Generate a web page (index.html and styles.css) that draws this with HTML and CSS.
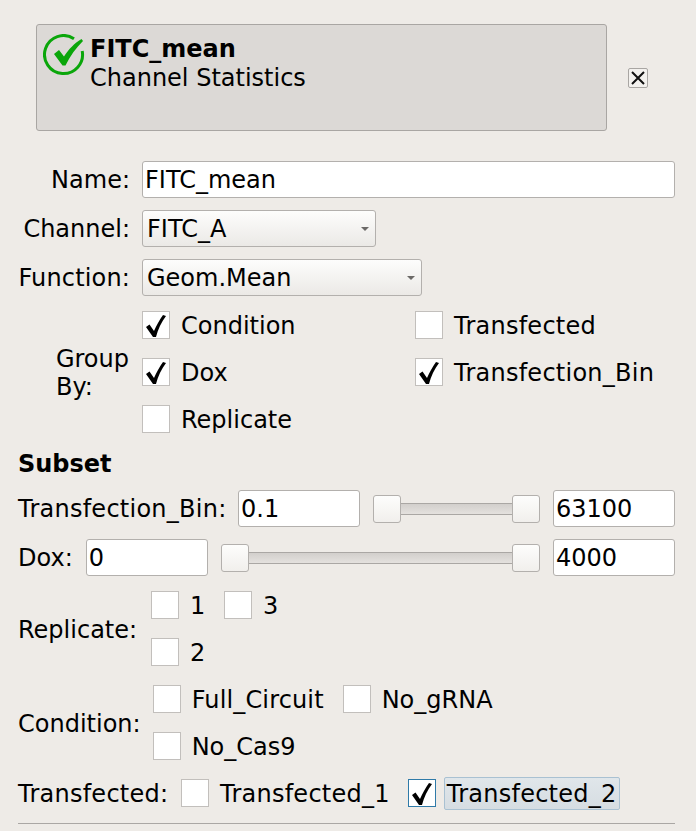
FILE: index.html
```html
<!DOCTYPE html>
<html lang="en">
  <head>
    <meta charset="UTF-8" />
    <title>FITC_mean</title>
    <link rel="stylesheet" href="styles.css">
  </head>
  <body>
    <svg class="defs" width="0" height="0">
      <symbol id="tick" viewBox="0 0 28 28">
        <path d="M4 16 L7.500 13.500 L12 20 C14.500 14 17.500 9 21 4 L24 5 C19.500 11 16 18 14 26 L11 26 Z" fill="#000" />
      </symbol>
    </svg>
    <div class="panel">
      <div class="head">
        <div class="card">
          <svg class="okicon" width="42" height="42" viewBox="0 0 42 42">
            <path d="M31 4.700 A19 19 0 1 0 39.200 17" fill="none" stroke="#0aa60a" stroke-width="3" />
            <path d="M11 20 L16 16 L21 22.500 C26 15 31 9.500 38.500 5 L40 7 C33 14 27 22 22.500 31.500 L19.500 31.500 Z" fill="#0aa60a" />
          </svg>
          <div class="cardtext">
            <div class="cardname">FITC_mean</div>
            <div>Channel Statistics</div>
          </div>
        </div>
        <div class="closebtn">
          <svg width="14" height="14" viewBox="0 0 14 14">
            <path d="M1 1 L13 13 M13 1 L1 13" stroke="#111" stroke-width="2" fill="none" />
          </svg>
        </div>
      </div>

      <div class="formrow first">
        <label class="lbl">Name:</label>
        <input class="txt wide" type="text" value="FITC_mean" />
      </div>
      <div class="formrow">
        <label class="lbl">Channel:</label>
        <div class="combo channel">FITC_A<span class="arrow"></span></div>
      </div>
      <div class="formrow">
        <label class="lbl"><span class="loose">Function:</span></label>
        <div class="combo func">Geom.Mean<span class="arrow"></span></div>
      </div>

      <div class="groupby">
        <div class="lbl grouplbl"><span>Group<br />By:</span></div>
        <div class="groupopts">
          <label class="opt"><span class="box"><svg width="28" height="28"><use href="#tick" /></svg></span>Condition</label>
          <label class="opt wider"><span class="box"></span>Transfected</label>
          <label class="opt"><span class="box"><svg width="28" height="28"><use href="#tick" /></svg></span>Dox</label>
          <label class="opt wider"><span class="box"><svg width="28" height="28"><use href="#tick" /></svg></span>Transfection_Bin</label>
          <label class="opt"><span class="box"></span>Replicate</label>
        </div>
      </div>

      <h2 class="subset">Subset</h2>

      <div class="rangerow">
        <label class="binlbl wider">Transfection_Bin:</label>
        <input class="txt num" type="text" value="0.1" />
        <div class="slider"><span class="handle"></span><span class="track"></span><span class="handle"></span></div>
        <input class="txt num" type="text" value="63100" />
      </div>
      <div class="rangerow">
        <label>Dox:</label>
        <input class="txt num" type="text" value="0" />
        <div class="slider"><span class="handle"></span><span class="track"></span><span class="handle"></span></div>
        <input class="txt num" type="text" value="4000" />
      </div>

      <div class="levels replicate">
        <label class="levellbl">Replicate:</label>
        <div class="levelgrid">
          <label class="opt"><span class="box"></span>1</label>
          <label class="opt"><span class="box"></span>3</label>
          <label class="opt"><span class="box"></span>2</label>
        </div>
      </div>
      <div class="levels condition">
        <label class="levellbl">Condition:</label>
        <div class="levelgrid">
          <label class="opt loose"><span class="box"></span>Full_Circuit</label>
          <label class="opt"><span class="box"></span>No_gRNA</label>
          <label class="opt"><span class="box"></span>No_Cas9</label>
        </div>
      </div>
      <div class="levels transfected">
        <label class="levellbl translbl wider">Transfected:</label>
        <label class="opt wider"><span class="box"></span>Transfected_1</label>
        <label class="opt wider focused"><span class="box"><svg width="28" height="28"><use href="#tick" /></svg></span><span class="seltext">Transfected_2</span></label>
      </div>
      <hr class="rule" />
    </div>
  </body>
</html>
```

FILE: styles.css
```css
html,
body {
  margin: 0;
  height: 831px;
  overflow: hidden;
  background: #eeebe7;
}
body {
  font-family: "DejaVu Sans", sans-serif;
  font-size: 24px;
  color: #000;
}
.defs {
  display: block;
  height: 0;
}
.panel {
  padding: 24px 21px 0 18px;
}
.wider {
  letter-spacing: 0.25px;
}
.loose {
  letter-spacing: 0.15px;
}

/* top card */
.head {
  display: flex;
  align-items: center;
  padding-left: 18px;
  height: 107px;
}
.card {
  box-sizing: border-box;
  display: flex;
  width: 571px;
  height: 107px;
  padding: 9px 0 0 6px;
  background: #dcd9d6;
  border: 1px solid #a9a6a3;
  border-radius: 3px;
}
.okicon {
  flex: none;
}
.cardtext {
  margin: 1px 0 0 5px;
  line-height: 29px;
}
.cardname {
  font-weight: bold;
}
.closebtn {
  box-sizing: border-box;
  display: flex;
  align-items: center;
  justify-content: center;
  width: 20px;
  height: 20px;
  margin-left: 21px;
  background: #f3f1ee;
  border: 1px solid #a9a6a3;
  border-radius: 2px;
}

/* name, channel, function */
.formrow {
  display: flex;
  align-items: center;
  gap: 12px;
  height: 37px;
  margin-top: 12px;
}
.formrow.first {
  margin-top: 30px;
}
.lbl {
  width: 112px;
  flex: none;
  text-align: right;
}
.txt {
  box-sizing: border-box;
  height: 37px;
  padding: 0 2px;
  font: inherit;
  color: #000;
  background: #fff;
  border: 1px solid #b3b0ad;
  border-radius: 3px;
  outline: none;
}
.wide {
  width: 533px;
}
.num {
  width: 122px;
  flex: none;
}
.combo {
  box-sizing: border-box;
  display: flex;
  align-items: center;
  justify-content: space-between;
  height: 37px;
  padding: 0 6px 0 4px;
  background: linear-gradient(#fdfdfc, #ebe9e6);
  border: 1px solid #b3b0ad;
  border-radius: 3px;
}
.channel {
  width: 234px;
}
.func {
  width: 280px;
}
.arrow {
  width: 0;
  height: 0;
  border-left: 4px solid transparent;
  border-right: 4px solid transparent;
  border-top: 4px solid #6b6967;
}

/* checkboxes */
.opt {
  display: flex;
  align-items: flex-start;
  height: 28px;
  line-height: 30px;
}
.box {
  box-sizing: border-box;
  flex: none;
  display: block;
  width: 28px;
  height: 28px;
  margin-right: 11px;
  background: #fff;
  border: 1px solid #c2bfbc;
}
.box svg {
  display: block;
  margin: -1px;
}

.groupby {
  display: flex;
  gap: 12px;
  margin-top: 15px;
}
.grouplbl {
  box-sizing: border-box;
  display: flex;
  align-items: center;
  justify-content: flex-end;
  padding: 2px 1px 0 0;
  text-align: left;
  line-height: 28px;
}
.groupopts {
  display: grid;
  grid-template-columns: 273px auto;
  row-gap: 19px;
}

.subset {
  margin: 17px 0 11px;
  font-size: 24px;
  line-height: 29px;
  font-weight: bold;
}

/* range rows */
.rangerow {
  display: flex;
  align-items: center;
  gap: 13px;
  height: 37px;
  margin-bottom: 12px;
}
.binlbl {
  flex: none;
  width: 207px;
  white-space: nowrap;
}
.slider {
  display: flex;
  align-items: center;
  flex: 1;
}
.handle {
  box-sizing: border-box;
  flex: none;
  width: 28px;
  height: 28px;
  background: linear-gradient(#fdfdfc, #f1efec);
  border: 1px solid #b3b0ad;
  border-radius: 3px;
}
.track {
  box-sizing: border-box;
  flex: 1;
  height: 12px;
  background: linear-gradient(#d2cfcc, #e4e1de);
  border-top: 1px solid #aaa7a4;
  border-bottom: 1px solid #aaa7a4;
}

/* level pickers */
.levels {
  display: flex;
  align-items: center;
}
.levellbl {
  padding-top: 2px;
}
.replicate {
  gap: 14px;
  margin-top: 15px;
}
.condition {
  gap: 12px;
  margin-top: 19px;
}
.transfected {
  height: 32px;
  margin-top: 17px;
  gap: 13px;
}
.translbl {
  flex: none;
  width: 150px;
  white-space: nowrap;
}
.levelgrid {
  display: grid;
  row-gap: 19px;
}
.replicate .levelgrid {
  grid-template-columns: 73px auto;
}
.condition .levelgrid {
  grid-template-columns: 190px auto;
}
.focused {
  margin-left: 5px;
}
.focused .box {
  margin-right: 8px;
  border-color: #2f7aa8;
}
.seltext {
  box-sizing: border-box;
  height: 33px;
  margin-top: -2px;
  line-height: 32px;
  padding: 0 2px;
  background: linear-gradient(#e0e6ea, #d6dde2);
  border: 1px solid #a9c1d2;
  border-radius: 2px;
}
.rule {
  margin: 14px 0 0;
  border: 0;
  border-top: 1px solid #aaa7a4;
}
```
